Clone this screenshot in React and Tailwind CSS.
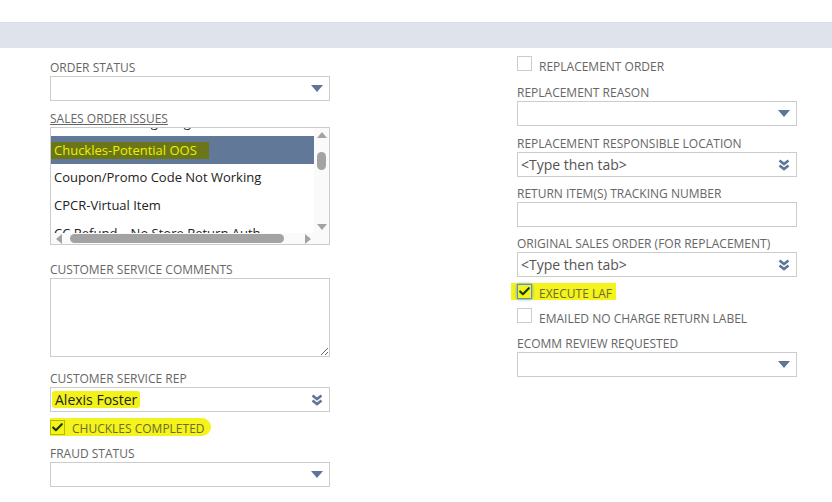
import { Check } from 'lucide-react'

const font = { fontFamily: '"Open Sans", "Liberation Sans", sans-serif' }

const labelCls = "block h-4 leading-4 text-[12px] uppercase text-[#666]"
const boxCls = "w-[280px] h-[25px] border border-[#ccc] bg-white flex items-center"

function DownArrow() {
  return (
    <svg width="12" height="7" viewBox="0 0 12 7" className="ml-auto mr-[6px]">
      <path d="M0 0 H12 L6 7 Z" fill="#5f7598" />
    </svg>
  )
}

function DoubleChevron() {
  return (
    <svg width="12" height="12" viewBox="0 0 12 12" className="ml-auto mr-[6px]">
      <path d="M1.5 1.5 L6 5 L10.5 1.5" fill="none" stroke="#5f7598" strokeWidth="2.6" />
      <path d="M1.5 6.5 L6 10 L10.5 6.5" fill="none" stroke="#5f7598" strokeWidth="2.6" />
    </svg>
  )
}

function SelectField({ label, className = '' }) {
  return (
    <div className={className}>
      <span className={labelCls}>{label}</span>
      <div className={boxCls}><DownArrow /></div>
    </div>
  )
}

function LookupField({ label, value, className = '' }) {
  return (
    <div className={className}>
      <span className={labelCls}>{label}</span>
      <div className={boxCls}>
        <span className="pl-[3px] text-[14px] text-[#555]">{value}</span>
        <DoubleChevron />
      </div>
    </div>
  )
}

function TextField({ label, className = '' }) {
  return (
    <div className={className}>
      <span className={labelCls}>{label}</span>
      <div className={boxCls} />
    </div>
  )
}

function CheckRow({ label, className = '' }) {
  return (
    <div className={`flex items-center h-[15px] ${className}`}>
      <span className="w-[15px] h-[15px] border border-[#ccc] bg-white" />
      <span className="ml-[7px] text-[12px] uppercase text-[#666] leading-4 mt-[7px]">{label}</span>
    </div>
  )
}

const issues = [
  'Coupon/Promo Code Not Working',
  'CPCR-Virtual Item',
]

function IssuesList() {
  return (
    <div className="relative w-[280px] h-[118px] border border-[#ccc] bg-white overflow-hidden">
      <div className="w-[264px]">
        {/* tail of the row above, scrolled out of view */}
        <div className="h-[8px] overflow-hidden flex items-end">
          <span className="pl-[3px] text-[13px] leading-[28px] text-[#222] whitespace-nowrap">Chuckles-Missing Long Item</span>
        </div>
        <div className="h-[28px] bg-[#617899] flex items-center">
          <span className="ml-[-3px] pl-[6px] pr-[12px] h-[17px] leading-[17px] bg-[#6a7618] text-[13px] text-[#eef000] rounded-l-[3px]">Chuckles-Potential OOS</span>
        </div>
        {issues.map(t => (
          <div key={t} className="h-[28px] flex items-center pl-[3px] text-[13px] text-[#222] whitespace-nowrap">{t}</div>
        ))}
        <div className="h-[28px] flex items-center pl-[3px] text-[13px] text-[#222] whitespace-nowrap">CC Refund – No Store Return Auth</div>
      </div>
      {/* vertical scrollbar */}
      <div className="absolute right-0 top-0 w-[15px] h-[106px] bg-[#fafafa] flex flex-col items-center">
        <svg width="10" height="6" viewBox="0 0 10 6" className="mt-[4px]"><path d="M0 6 H10 L5 0 Z" fill="#a3a3a3" /></svg>
        <div className="mt-[14px] w-[9px] h-[18px] rounded-full bg-[#a3a3a3]" />
        <svg width="10" height="6" viewBox="0 0 10 6" className="mt-auto mb-[4px]"><path d="M0 0 H10 L5 6 Z" fill="#a3a3a3" /></svg>
      </div>
      {/* horizontal scrollbar */}
      <div className="absolute left-0 bottom-0 w-full h-[11px] bg-[#fafafa] flex items-center">
        <svg width="6" height="10" viewBox="0 0 6 10" className="ml-[5px]"><path d="M6 0 V10 L0 5 Z" fill="#a3a3a3" /></svg>
        <div className="ml-[8px] w-[214px] h-[9px] rounded-full bg-[#a3a3a3]" />
        <svg width="6" height="10" viewBox="0 0 6 10" className="ml-[21px]"><path d="M0 0 V10 L6 5 Z" fill="#a3a3a3" /></svg>
      </div>
    </div>
  )
}

export default function App() {
  return (
    <div style={font} className="w-[832px] h-[502px] bg-white overflow-hidden">
      <div className="h-[22px]" />
      <div className="h-[26px] bg-[#dfe3eb] border-t border-[#d8dce4]" />

      <div className="flex pl-[50px]">
        {/* left column */}
        <div className="w-[280px]">
          <SelectField label="Order Status" className="mt-[12px]" />

          <div className="mt-[10px]">
            <span className={`${labelCls} underline`}>Sales Order Issues</span>
            <IssuesList />
          </div>

          <div className="mt-[17px]">
            <span className={labelCls}>Customer Service Comments</span>
            <textarea className="block w-[280px] h-[79px] border border-[#ccc] bg-white resize-y outline-none" />
          </div>

          <div className="mt-[14px]">
            <span className={labelCls}>Customer Service Rep</span>
            <div className={boxCls}>
              <span className="ml-[1px] px-[3px] h-[17px] leading-[17px] bg-[#f2f21a] text-[14px] text-[#222] rounded-[3px]">Alexis Foster</span>
              <DoubleChevron />
            </div>
          </div>

          <div className="mt-[6px] flex items-center">
            <div className="flex items-center h-[18px] pr-[6px] bg-[#f4f41c] rounded-r-full rounded-l-[4px]">
              <span className="w-[15px] h-[15px] border border-[#b8b800] flex items-center justify-center">
                <Check size={13} strokeWidth={4} className="text-[#1f3a00]" />
              </span>
              <span className="ml-[7px] text-[12px] uppercase text-[#6b6b2e] leading-4 mt-[4px]">Chuckles Completed</span>
            </div>
          </div>

          <SelectField label="Fraud Status" className="mt-[10px]" />
        </div>

        {/* right column */}
        <div className="w-[280px] ml-[187px]">
          <CheckRow label="Replacement Order" className="mt-[8px]" />
          <SelectField label="Replacement Reason" className="mt-[14px]" />
          <LookupField label="Replacement Responsible Location" value="<Type then tab>" className="mt-[10px]" />
          <TextField label="Return Item(s) Tracking Number" className="mt-[9px]" />
          <LookupField label="Original Sales Order (for Replacement)" value="<Type then tab>" className="mt-[9px]" />

          <div className="mt-[6px] flex items-center">
            <div className="flex items-center h-[17px] pr-[4px] bg-[#f4f41c] ml-[-6px] pl-[6px]">
              <span className="w-[15px] h-[15px] border border-[#5b8fd6] shadow-[0_0_3px_#5b8fd6] flex items-center justify-center">
                <Check size={13} strokeWidth={4} className="text-[#1f3a00]" />
              </span>
              <span className="ml-[7px] text-[12px] uppercase text-[#6b6b2e] leading-4 mt-[4px]">Execute LAF</span>
            </div>
          </div>

          <CheckRow label="Emailed No Charge Return Label" className="mt-[8px]" />
          <SelectField label="Ecomm Review Requested" className="mt-[13px]" />
        </div>
      </div>
    </div>
  )
}
